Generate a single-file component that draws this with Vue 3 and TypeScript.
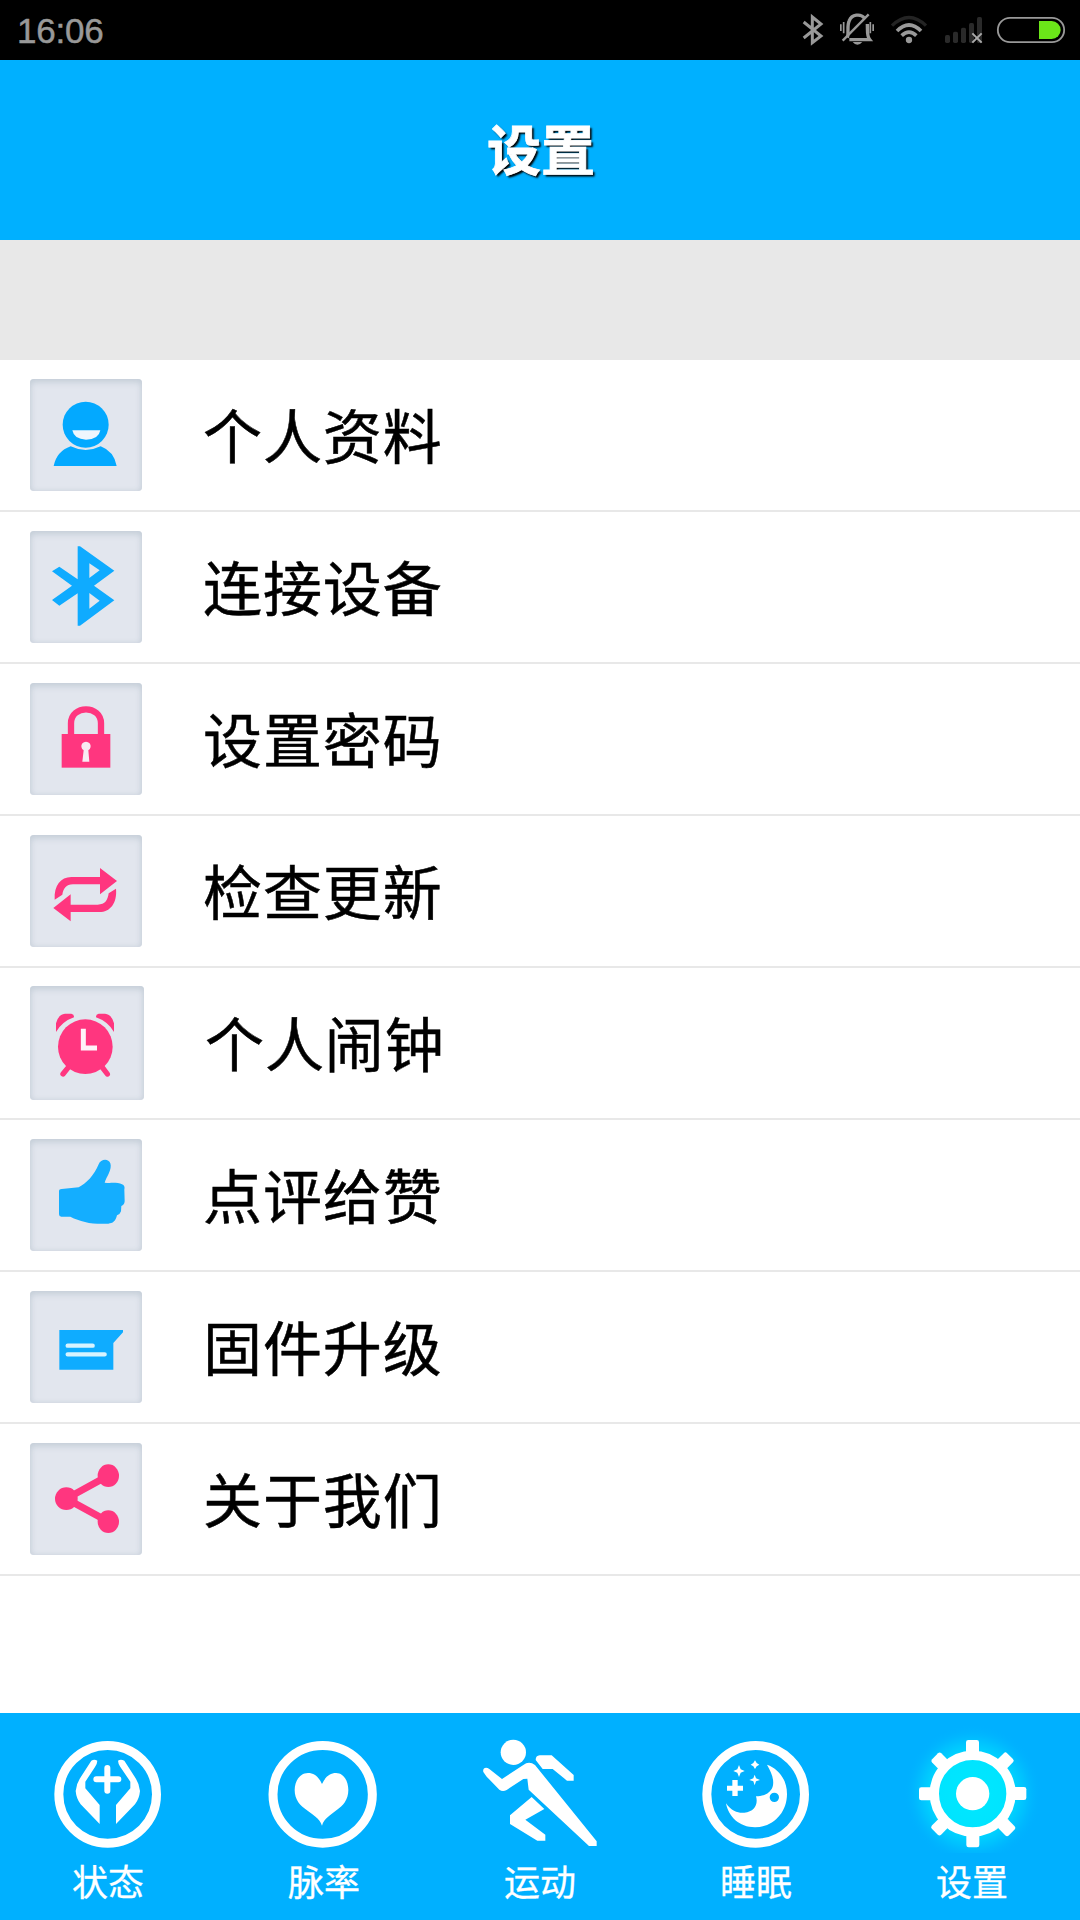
<script setup lang="ts">
interface MenuItem {
  id: string
  label: string
  viewBox: string
  large?: boolean
}

interface TabItem {
  id: string
  label: string
  viewBox: string
}

const menu: MenuItem[] = [
  { id: 'profile', label: '个人资料', viewBox: '90 87 336 336' },
  { id: 'device', label: '连接设备', viewBox: '90 543 336 336' },
  { id: 'password', label: '设置密码', viewBox: '90 69 336 336' },
  { id: 'update', label: '检查更新', viewBox: '90 525 336 336' },
  { id: 'alarm', label: '个人闹钟', viewBox: '90 78 342 342', large: true },
  { id: 'like', label: '点评给赞', viewBox: '90 537 336 336' },
  { id: 'firmware', label: '固件升级', viewBox: '90 78 336 336' },
  { id: 'about', label: '关于我们', viewBox: '90 534 336 336' },
]

const tabs: TabItem[] = [
  { id: 'status', label: '状态', viewBox: '0 39 648 420' },
  { id: 'pulse', label: '脉率', viewBox: '648 39 648 420' },
  { id: 'sport', label: '运动', viewBox: '96 39 648 420' },
  { id: 'sleep', label: '睡眠', viewBox: '-96 39 648 420' },
  { id: 'settings', label: '设置', viewBox: '552 39 648 420' },
]

// Top edge of each gear tooth, clockwise from twelve o'clock
const gearTeeth: number[] = [120, 122, 120, 116, 120, 120, 120, 122]
</script>

<template>
  <div class="screen">
    <div class="status-bar">
      <span class="time">16:06</span>
      <svg class="status-icons" viewBox="0 0 900 180">
        <g fill="none" stroke="#999">
          <path d="M71 66 L123 108 L97 128 V51 L123 72 L71 114" stroke-width="9" />
          <path d="M202 113 C207 100 200 76 208 62 C215 43 242 40 253 54 M262 72 C263 92 260 108 269 119 H208" stroke-width="10" />
          <path d="M188 122 L266 43" stroke-width="7" />
          <path d="M182.500 73V93 M191 66V100 M271 66V100 M279.500 73V93" stroke-width="5" />
          <path d="M218 126 H247 Q232 143 218 126Z" fill="#999" stroke="none" />
          <path d="M336 77 Q387 28 438 77" stroke="#242424" stroke-width="10" />
          <path d="M351 93 Q387 57 423 93" stroke-width="11" />
          <path d="M365 107 Q387 86 409 107" stroke-width="11" />
        </g>
        <circle cx="387" cy="120" r="9.500" fill="#999" />
        <g fill="#2a2a2a">
          <rect x="495" y="105" width="15" height="24" rx="5" />
          <rect x="519" y="95" width="15" height="34" rx="5" />
          <rect x="543" y="83" width="15" height="46" rx="5" />
          <rect x="567" y="69" width="15" height="60" rx="5" />
          <rect x="591" y="51" width="15" height="78" rx="5" />
        </g>
        <path d="M577 100 L605 128 M605 100 L577 128" stroke="#aaa" stroke-width="6" />
        <rect x="653.500" y="53.500" width="199" height="73" rx="36.500" fill="none" stroke="#999" stroke-width="5.500" />
        <path d="M777 63 H815 A27 27 0 0 1 815 117 H777Z" fill="#6be619" />
      </svg>
    </div>

    <header class="header"><h1>设置</h1></header>
    <div class="spacer"></div>

    <main class="menu">
      <div v-for="item in menu" :key="item.id" class="row">
        <div class="tile" :class="{ large: item.large }">
          <svg :viewBox="item.viewBox" class="glyph">
            <g v-if="item.id === 'profile'" fill="#03a9ff">
              <circle cx="257" cy="224" r="69" />
              <path d="M217 241 H301 Q296 269 258 269 Q222 268 217 241Z" fill="#eef6fd" />
              <path d="M161 348 Q170 304 212 289 Q257 311 302 289 Q342 304 350 348Z" />
            </g>
            <path
              v-else-if="item.id === 'device'"
              fill="#0fabff"
              fill-rule="evenodd"
              d="M233 589 H240 L343 662 L282 707 L343 751 L240 827 H233 V730 L178 767 L156 750 L216 707 L156 664 L178 650 L233 688Z M268 640 V684 L299 661Z M268 729 V776 L299 752Z"
            />
            <g v-else-if="item.id === 'password'" fill="#ff367f">
              <path d="M213 226 V190 C213 134 303 134 303 190 V226" fill="none" stroke="#ff367f" stroke-width="19" />
              <rect x="185" y="222" width="146" height="101" />
              <path d="M251 271 A14 14 0 1 1 265 271 L268 305 H247Z" fill="#f8eaf2" />
            </g>
            <g v-else-if="item.id === 'update'" fill="#ff367f">
              <path d="M164 719 C162 676 182 651 214 651 H300 V624 L351 663 L300 703 V673 H219 C198 673 190 687 187 704Z" />
              <path d="M348 686 C352 730 330 756 298 756 H212 V784 L160 744 L212 703 V734 H293 C316 734 323 720 326 700Z" />
            </g>
            <g v-else-if="item.id === 'alarm'" fill="#ff367f">
              <circle cx="256" cy="260" r="82" />
              <path d="M168 216 V190 Q175 163 195 161 H214 Q223 163 222 172 Q187 184 168 216Z M342 216 V190 Q335 163 315 161 H296 Q287 163 288 172 Q323 184 342 216Z" />
              <path d="M205 322 L189 342 M307 322 L322 342" stroke="#ff367f" stroke-width="16" stroke-linecap="round" />
              <path d="M250 206 V264 H291" fill="none" stroke="#fff3f9" stroke-width="15" />
            </g>
            <path
              v-else-if="item.id === 'like'"
              fill="#14aeff"
              d="M177 694 Q177 687 185 687 L236 682 C260 669 282 647 296 613 C302 596 326 595 331 610 C337 628 320 650 314 668 C331 670 354 666 366 673 Q376 677 373 689 L374 724 Q373 735 364 738 L363 754 Q361 762 351 766 C347 784 338 790 325 791 C278 794 244 786 211 770 L184 770 Q177 770 177 763Z"
            />
            <g v-else-if="item.id === 'firmware'">
              <path d="M178 195 H369 V202 L340 234 V314 H178Z" fill="#0facff" />
              <path d="M203 242 H278 M203 268 H314" stroke="#d7f3ff" stroke-width="13" stroke-linecap="round" />
            </g>
            <g v-else fill="#ff367f">
              <path d="M325 632 L199 701 L325 770" fill="none" stroke="#ff367f" stroke-width="21" />
              <ellipse cx="325" cy="632" rx="32" ry="34" />
              <circle cx="199" cy="701" r="34" />
              <ellipse cx="325" cy="770" rx="32" ry="34" />
            </g>
          </svg>
        </div>
        <span class="label">{{ item.label }}</span>
      </div>
    </main>

    <nav class="tabs">
      <div v-for="tab in tabs" :key="tab.id" class="tab">
        <svg :viewBox="tab.viewBox" class="tab-icon" fill="#fff">
          <template v-if="tab.id === 'status'">
            <circle cx="323" cy="283" r="146.500" fill="none" stroke="#fff" stroke-width="27" />
            <path d="M322 204 V272 M289 238 H355" stroke="#fff" stroke-width="18" stroke-linecap="round" />
            <path d="M274 182 Q283 177 292 182 Q291 194 285 201 L256 245 V265 L299 315 V372 L242 313 Q229 296 227 273 Q230 248 243 230Z" />
            <path d="M373 182 Q362 177 354 182 Q355 194 361 201 L391 245 V265 L348 315 V372 L405 313 Q418 296 420 273 Q417 248 404 230Z" />
          </template>
          <template v-else-if="tab.id === 'pulse'">
            <ellipse cx="968" cy="283" rx="149" ry="146.500" fill="none" stroke="#fff" stroke-width="27" />
            <path d="M966 252 C977 229 990 219 1008 219 C1031 219 1045 243 1045 270 C1045 331 979 334 966 377 C953 334 884 331 884 270 C884 243 900 219 924 219 C943 219 957 232 966 252Z" />
          </template>
          <template v-else-if="tab.id === 'sport'">
            <circle cx="340" cy="157" r="38" />
            <path d="M250 216 C247 205 257 199 268 207 L306 237 L370 195 Q387 182 405 195 L590 424 V438 H567 L386 269 L382 236 L370 237 L320 270 Q308 277 298 269 L260 230Z" />
            <path d="M407 180 Q407 167 419 166 H455 L521 225 V242 H501 L458 207 H428Z" />
            <path d="M395 291 L433 327 L376 359 L436 404 V422 H412 L330 372 V346Z" />
          </template>
          <template v-else-if="tab.id === 'sleep'">
            <circle cx="227" cy="283" r="146.500" fill="none" stroke="#fff" stroke-width="27" />
            <path
              fill-rule="evenodd"
              d="M261 194 C296 206 321 239 321 282 C321 340 277 382 225 382 C177 382 145 349 138 310 C155 336 178 340 193 338 C224 335 235 312 228 289 C247 289 264 284 275 267 C286 246 276 220 261 194Z M283 278 A14 14 0 1 0 283 306 A14 14 0 1 0 283 278Z"
            />
            <path d="M157 240 H173 V257 H189 V272 H173 V288 H157 V272 H141 V257 H157Z" />
            <path d="M177 195 L182 208 L194 213 L182 218 L177 231 L172 218 L160 213 L172 208Z M225 181 L230 189 L238 194 L230 199 L225 207 L220 199 L212 194 L220 189Z M224 224 L228 235 L240 240 L228 244 L224 256 L220 244 L208 240 L220 235Z" />
          </template>
          <template v-else>
            <defs>
              <radialGradient id="gear-glow">
                <stop offset="0" stop-color="#00e8ff" />
                <stop offset=".48" stop-color="#00e4ff" />
                <stop offset=".67" stop-color="#00ccff" />
                <stop offset=".82" stop-color="#00baff" />
                <stop offset="1" stop-color="#00b0ff" stop-opacity="0" />
              </radialGradient>
            </defs>
            <circle cx="878" cy="281" r="208" fill="url(#gear-glow)" />
            <circle cx="878" cy="281" r="115" fill="none" stroke="#fff" stroke-width="28" />
            <circle cx="878" cy="281" r="50" />
            <rect
              v-for="(top, n) in gearTeeth"
              :key="n"
              x="858"
              :y="top"
              width="39"
              height="43"
              rx="7"
              :transform="`rotate(${n * 45} 878 281)`"
            />
          </template>
        </svg>
        <span class="tab-label">{{ tab.label }}</span>
      </div>
    </nav>
  </div>
</template>

<style>
body {
  margin: 0;
}
</style>

<style scoped>
.screen {
  display: flex;
  flex-direction: column;
  width: 1080px;
  height: 1920px;
  overflow: hidden;
  background: #fff;
  font-family: "Noto Sans CJK SC", sans-serif;
}

.status-bar {
  display: flex;
  flex: none;
  justify-content: space-between;
  height: 60px;
  background: #000;
}

.time {
  padding-left: 17px;
  color: #999;
  font: 35px/61px "Liberation Sans", Arial, sans-serif;
  letter-spacing: -0.2px;
  -webkit-text-stroke: 0.5px #999;
}

.status-icons {
  width: 300px;
  height: 60px;
}

.header {
  display: flex;
  flex: none;
  align-items: center;
  justify-content: center;
  box-sizing: border-box;
  height: 180px;
  padding: 0 0 4px 2px;
  background: #00b0ff;
}

h1 {
  margin: 0;
  color: #fff;
  font-size: 54px;
  font-weight: 700;
  line-height: 80px;
  text-shadow: 2px 2px 2px #000;
  -webkit-text-stroke: 0.8px #fff;
}

.spacer {
  flex: none;
  height: 120px;
  background: #e8e8e8;
}

.menu {
  flex: 1;
}

.row {
  display: flex;
  align-items: center;
  box-sizing: border-box;
  height: 152px;
  padding-left: 30px;
  border-bottom: 2px solid #e8e8e8;
}

.tile {
  flex: none;
  width: 112px;
  height: 112px;
  border-radius: 4px;
  background: #e2e6ee;
  box-shadow: inset 0 3px 7px #c5ced8, inset 0 0 5px #d0d7e0;
}

.tile.large {
  width: 114px;
  height: 114px;
}

.glyph {
  display: block;
  width: 100%;
  height: 100%;
}

.label {
  margin-left: 61px;
  padding-bottom: 2px;
  color: #000;
  font-size: 59px;
  line-height: 90px;
  letter-spacing: 0.9px;
  -webkit-text-stroke: 0.5px #000;
}

.tabs {
  display: flex;
  flex: none;
  height: 207px;
  background: #00b0ff;
}

.tab {
  display: flex;
  flex: 1;
  flex-direction: column;
  align-items: center;
}

.tab-icon {
  width: 216px;
  height: 140px;
}

.tab-label {
  color: #fff;
  font-size: 36px;
  line-height: 54px;
  -webkit-text-stroke: 0.3px #fff;
}
</style>
